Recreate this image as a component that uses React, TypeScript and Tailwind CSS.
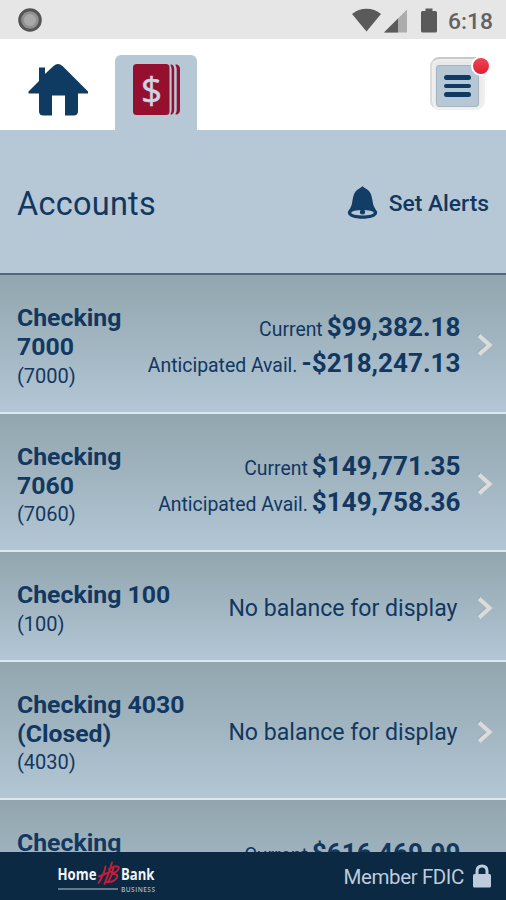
import React from "react";

type Account = {
  name: string[];
  number: string;
  current?: string;
  available?: string;
};

const accounts: Account[] = [
  { name: ["Checking", "7000"], number: "(7000)", current: "$99,382.18", available: "-$218,247.13" },
  { name: ["Checking", "7060"], number: "(7060)", current: "$149,771.35", available: "$149,758.36" },
  { name: ["Checking 100"], number: "(100)" },
  { name: ["Checking 4030", "(Closed)"], number: "(4030)" },
  { name: ["Checking", "6160"], number: "(6160)", current: "$616,469.99", available: "$616,469.99" },
];

function StatusBar() {
  return (
    <div className="flex h-[39px] shrink-0 items-center bg-[#e6e6e6] pl-[18px] pr-[13px] pt-px">
      <svg width="24" height="24" viewBox="0 0 24 24">
        <circle cx="12" cy="12" r="10.3" fill="#909090" stroke="#555" strokeWidth="3" />
        <circle cx="12" cy="12" r="6" fill="#a9a9a9" />
      </svg>
      <svg className="ml-auto" width="90" height="28" viewBox="0 0 90 28">
        <path d="M3 8C11 1 24 1 32 8L17.500 25.500Z" fill="#5a5a5a" />
        <path d="M58 3.500V26.500H35Z" fill="#acacac" />
        <path d="M49 12.500V26.500H35Z" fill="#5a5a5a" />
        <path d="M76.500 2.500h7v2.500h3q1.500 0 1.500 1.500V25q0 1.500-1.500 1.500H73.500Q72 26.500 72 25V6.500Q72 5 73.500 5h3Z" fill="#5a5a5a" />
      </svg>
      <span className="ml-[8px] w-[46px] pt-[3px] text-right text-[22.800px] font-medium leading-[28px] text-[#626262]">6:18</span>
    </div>
  );
}

function NavBar() {
  return (
    <div className="flex h-[91px] shrink-0 items-end bg-white">
      <svg className="mb-[14px] ml-[28px]" width="61" height="53" viewBox="0 0 61 53">
        <path
          d="M11 4.500h6v6.500L25.500 3q4.500-4 9 0L60 28.500v2H50V48q0 4.500-4.500 4.500H37V32.500H24v20H15.500Q11 52.500 11 48V30.500H.5v-2L11 18Z"
          fill="#0f3a62"
        />
      </svg>
      <div className="ml-[26px] flex h-[75px] w-[82px] rounded-t-[6px] bg-[#b6c8d5] pl-[18px] pt-[9px]">
        <svg width="48" height="52" viewBox="0 0 48 52">
          <rect x="0" y="0" width="36.500" height="51" rx="3.500" fill="#95102f" />
          <path d="M37.600 .2Q41.200 1 41.200 5V46Q41.200 50 37.600 50.800V49.500Q38.600 48 38.600 46V5Q38.600 3 37.600 1.500Z" fill="#95102f" />
          <path d="M42.600 .2Q47 1 47 5V46Q47 50 42.600 50.800V49.500Q43.700 48 43.700 46V5Q43.700 3 42.600 1.500Z" fill="#95102f" />
          <text x="18.500" y="38.800" textAnchor="middle" fontSize="37" fill="#cdd5e4" stroke="#cdd5e4" strokeWidth=".5" fontFamily="Open Sans, sans-serif">$</text>
        </svg>
      </div>
      <div className="relative mb-[20px] ml-auto mr-[21px] flex h-[53px] w-[55px] items-end justify-center rounded-[9px] border-2 border-[#f0f0f0] border-l-[#dcdcdc] border-t-[#c9c9c9] bg-[#e8e8e8] pb-px shadow-[inset_0_0_4px_#fafafa]">
        <div className="flex h-[42px] w-[43px] flex-col items-center justify-center gap-[4px] rounded-[3px] border border-[#a9b5be] bg-[#b6c8d5]">
          <i className="h-[4.500px] w-[27px] rounded-full bg-[#0f3a62]" />
          <i className="h-[4.500px] w-[27px] rounded-full bg-[#0f3a62]" />
          <i className="h-[4.500px] w-[27px] rounded-full bg-[#0f3a62]" />
        </div>
        <span className="absolute -right-[8px] -top-[3px] h-[20px] w-[20px] rounded-full border-2 border-white bg-linear-to-b from-[#ee4454] to-[#e01c32]" />
      </div>
    </div>
  );
}

function Heading() {
  return (
    <div className="flex h-[145px] shrink-0 items-center border-b-2 border-[#506780] bg-[#b6c8d5] pl-[17px] pr-[17px] pt-[5px]">
      <h1 className="w-[150px] text-[32.500px] leading-[40px] tracking-[0.250px]">Accounts</h1>
      <svg className="-mt-[2px] ml-auto" width="31" height="34" viewBox="0 0 30 34" preserveAspectRatio="none">
        <path d="M15 .3L18 2.500C24 5 24 12 25.500 19Q26.500 22 29 25.500C32 35 -2 35 1 25.500Q3.500 22 4.500 19C6 12 6 5 12 2.500Z" fill="#123d66" />
        <ellipse cx="15" cy="26.800" rx="11" ry="2.800" fill="#b6c8d5" />
        <circle cx="15" cy="26" r="2.500" fill="#123d66" />
      </svg>
      <span className="ml-[11px] text-right text-[22.800px] font-medium leading-[30px]">Set Alerts</span>
    </div>
  );
}

function Chevron() {
  return (
    <svg className="ml-[15px] shrink-0" width="17" height="26" viewBox="0 0 17 26">
      <path d="M2.500 3L13 12.500L2.500 22" fill="none" stroke="#8999a3" strokeWidth="4" />
      <path d="M3 3.500L13.500 13L3 22.500" fill="none" stroke="#dadbda" strokeWidth="4.300" />
    </svg>
  );
}

function Balance({ label, value }: { label: string; value: string }) {
  return (
    <div className="flex h-[36px] items-baseline justify-end whitespace-nowrap leading-[36px]">
      <span className="text-[19.400px]">{label}</span>
      <span className="ml-[4px] text-[26px] font-bold tracking-[0.050px]">{value}</span>
    </div>
  );
}

function AccountRow({ account }: { account: Account }) {
  return (
    <div className="flex shrink-0 items-center border-b-2 border-[#dce9f1] bg-linear-to-b from-[#91a6ae] to-[#b2c6d5] pb-[20.500px] pl-[17px] pr-[13.500px] pt-[28px]">
      <div>
        {account.name.map((line) => (
          <div key={line} className="whitespace-nowrap text-[24.800px] font-bold leading-[29.300px]">{line}</div>
        ))}
        <div className="text-[20px] leading-[29.600px]">{account.number}</div>
      </div>
      <div className="-mt-[3.500px] ml-auto flex items-center">
        {account.current && account.available ? (
          <div>
            <Balance label="Current" value={account.current} />
            <Balance label="Anticipated Avail." value={account.available} />
          </div>
        ) : (
          <div className="mr-[3px] whitespace-nowrap pt-[2px] text-[23.100px] leading-[30px]">No balance for display</div>
        )}
        <Chevron />
      </div>
    </div>
  );
}

function Footer() {
  return (
    <div className="flex h-[48px] shrink-0 items-center bg-[#0b2943] pl-[57px] pr-[15px] pt-[2px] text-[#bdcbdc]">
      <svg className="-mt-[5px]" width="100" height="42" viewBox="0 0 100 42" fontFamily="Open Sans, sans-serif">
        <text x="0.500" y="26" fontSize="15.500" fontWeight="700" fill="#f2f5f8" textLength="39" lengthAdjust="spacingAndGlyphs">Home</text>
        <text x="64" y="26" fontSize="15.500" fontWeight="700" fill="#f2f5f8" textLength="33.500" lengthAdjust="spacingAndGlyphs">Bank</text>
        <path d="M48.500 12.500Q47 21 41.500 29M55 8.500Q52 20 47.500 30M42 22.500Q48 20 54 17.500M56.500 14Q55 22 51 28.500M52 15Q60 10.500 62 13.500Q61 18 54.500 20Q61.500 19.500 60 23.500Q57 28.500 50 28" fill="none" stroke="#bd1f3c" strokeWidth="1.900" strokeLinecap="round" />
        <path d="M1 35H61" stroke="#8395a6" strokeWidth="1.500" />
        <text x="64" y="37.500" fontSize="6.500" fontWeight="600" fill="#aab8c6" textLength="34">BUSINESS</text>
      </svg>
      <span className="ml-auto whitespace-nowrap text-[20.500px] leading-[28px] tracking-[-0.400px]">Member FDIC</span>
      <svg className="-mt-[2px] ml-[9px]" width="18" height="24" viewBox="0 0 18 24">
        <path d="M4 11V7Q4 2 9 2T14 7V11" fill="none" stroke="#bdcbdc" strokeWidth="3" />
        <rect x="0" y="10" width="18" height="13.500" rx="1.500" fill="#bdcbdc" />
      </svg>
    </div>
  );
}

export default function App() {
  return (
    <div className="flex h-[900px] w-[506px] flex-col overflow-hidden bg-[#b6c8d5] font-[Roboto,sans-serif] text-[#123761]">
      <StatusBar />
      <NavBar />
      <Heading />
      <div className="flex min-h-0 flex-1 flex-col overflow-hidden">
        {accounts.map((account) => (
          <AccountRow key={account.number} account={account} />
        ))}
      </div>
      <Footer />
    </div>
  );
}
